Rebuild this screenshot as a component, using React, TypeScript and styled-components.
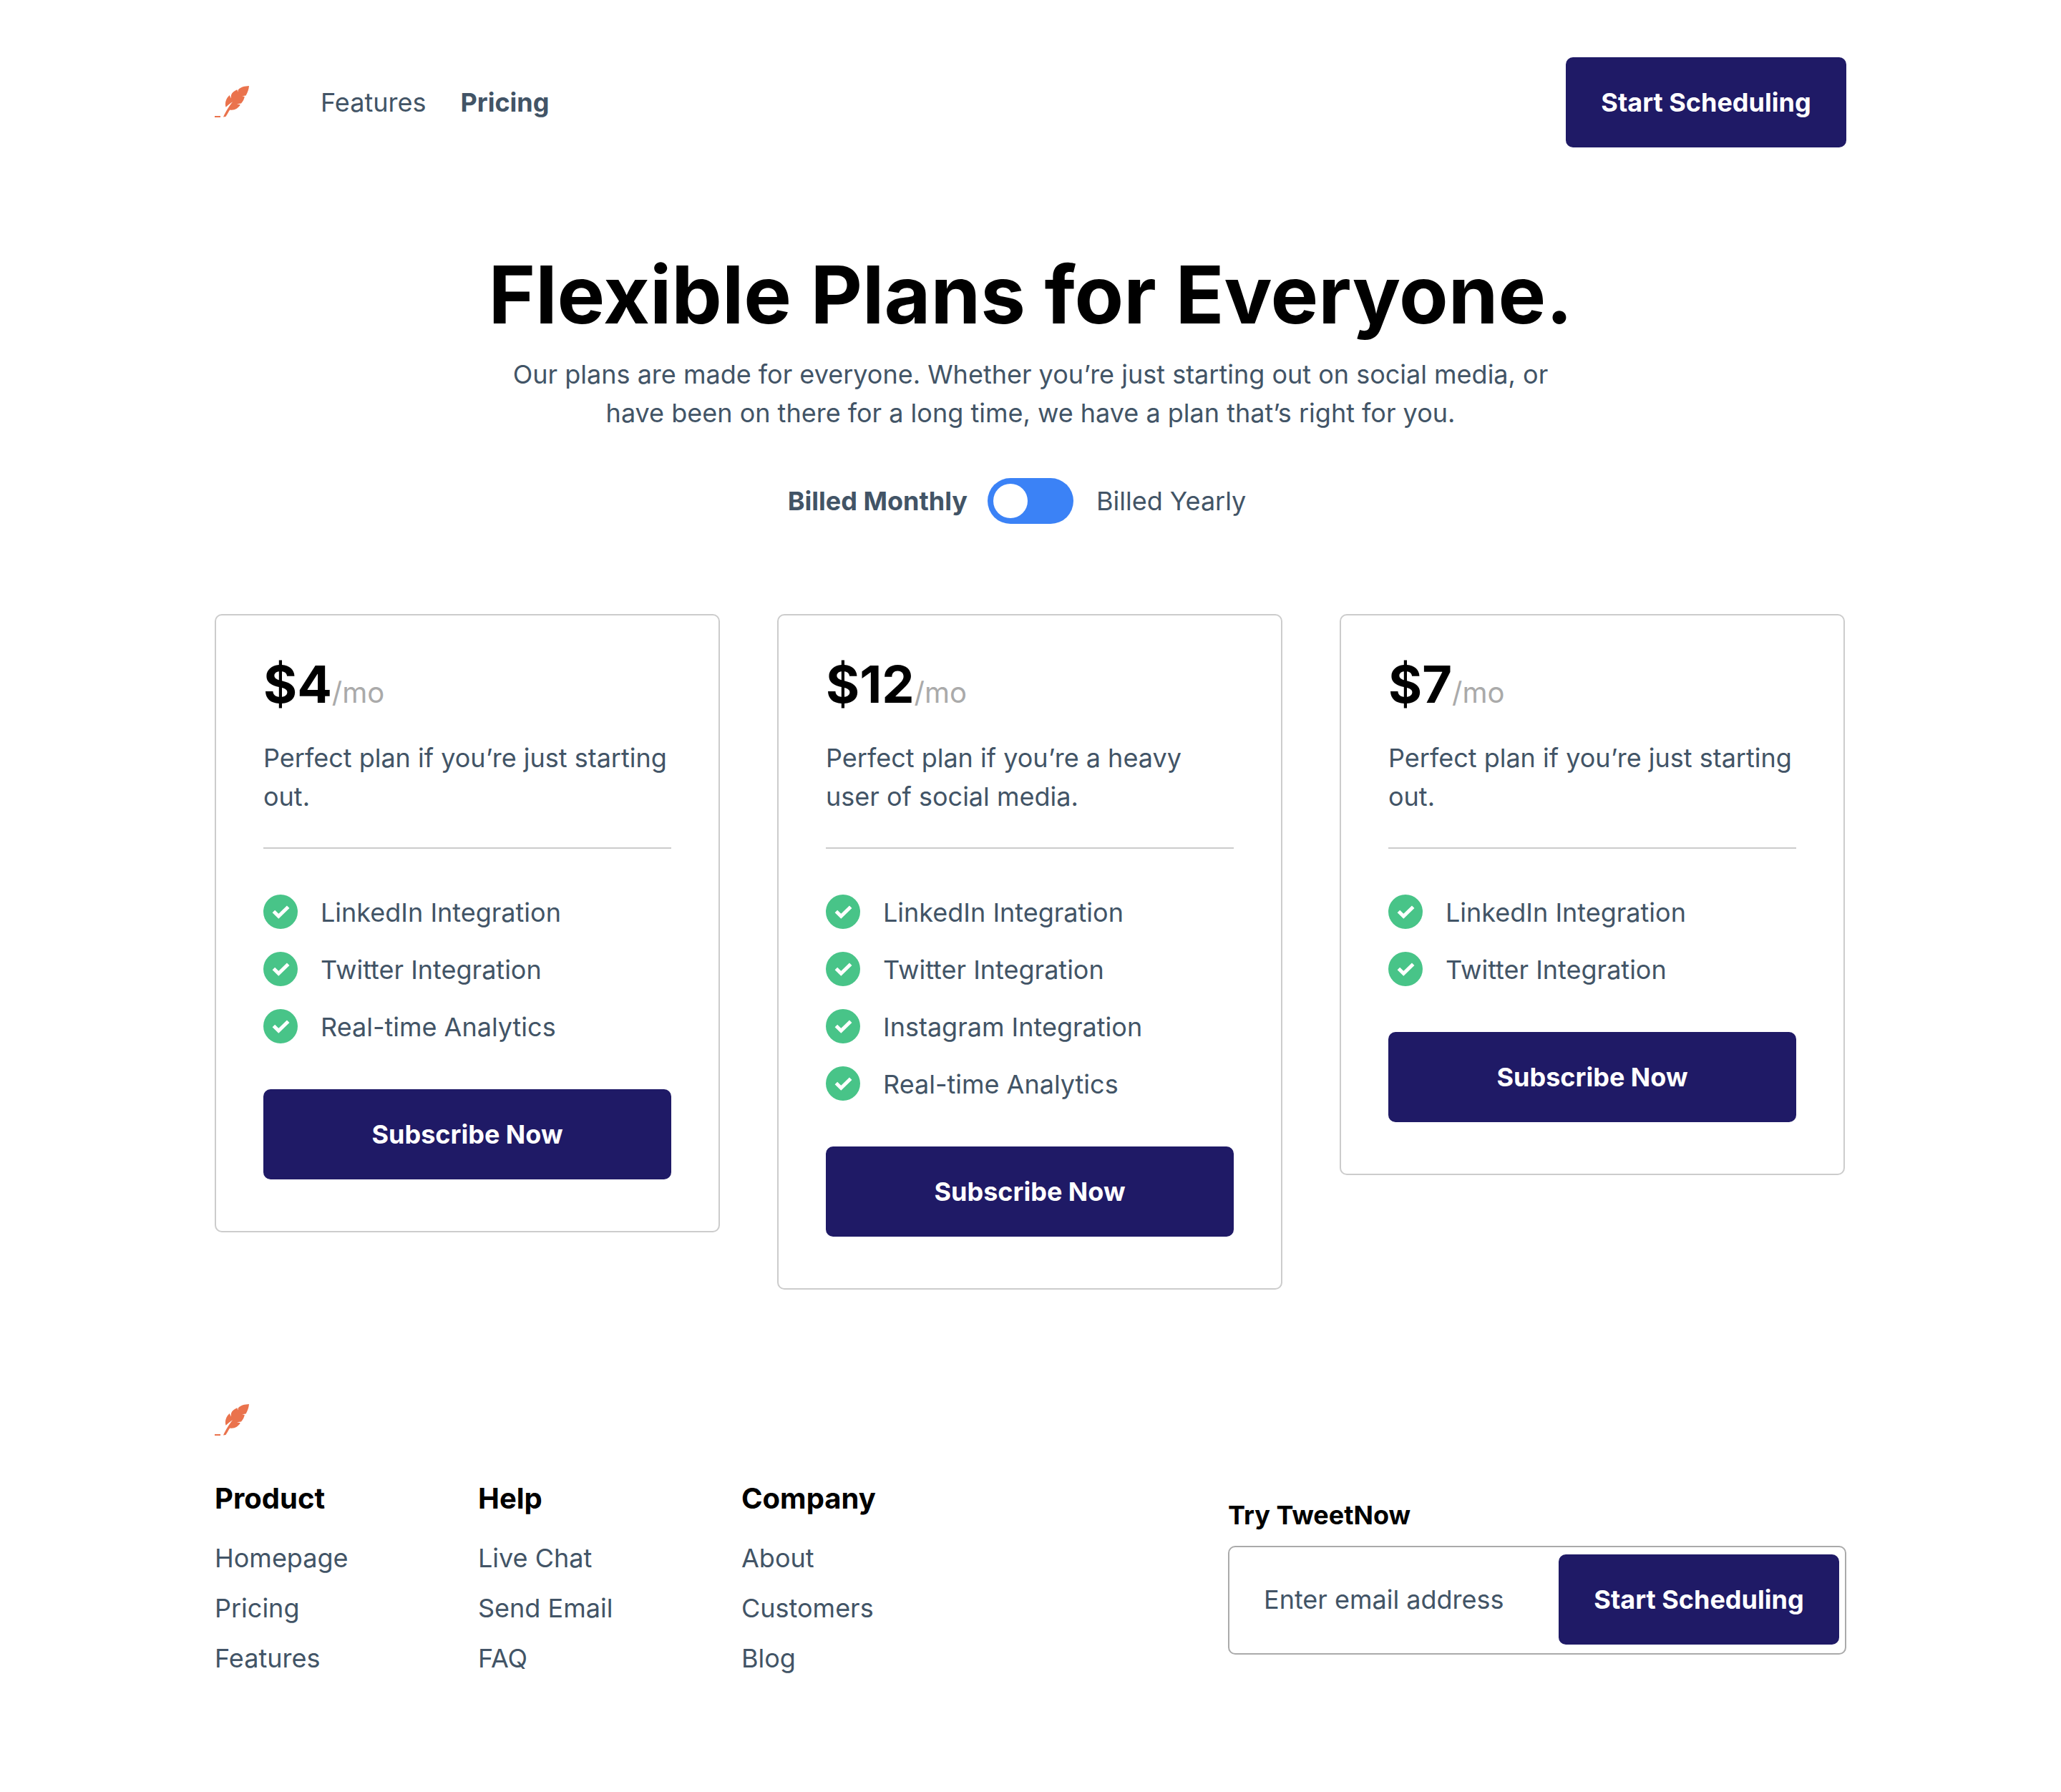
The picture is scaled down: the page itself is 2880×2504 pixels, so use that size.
import React, { useState } from 'react';
import styled, { createGlobalStyle } from 'styled-components';

const color = {
  ink: '#000000',
  text: '#425466',
  muted: '#aaaaaa',
  line: '#cccccc',
  field: '#aaaaaa',
  primary: '#1f1a66',
  accent: '#3b82f6',
  success: '#48c488',
  brand: '#ea734d',
};

const GlobalStyle = createGlobalStyle`
  *, *::before, *::after { box-sizing: border-box; }
  body {
    margin: 0;
    background: #ffffff;
    color: ${color.text};
    font-family: Inter, "Liberation Sans", sans-serif;
    font-size: 36px;
    line-height: 54px;
  }
  h1, h2, p, ul { margin: 0; padding: 0; }
  ul { list-style: none; }
  button, input { font: inherit; }
`;

const Page = styled.div`
  width: min(2280px, 100% - 96px);
  margin: 0 auto;
  padding: 80px 0 160px;
`;

const Header = styled.header`
  display: flex;
  align-items: center;
  justify-content: space-between;
`;

const Nav = styled.nav`
  display: flex;
  align-items: center;
  gap: 48px;
`;

const HomeLink = styled.a`
  display: block;
  width: 48px;
  height: 46px;
  margin-right: 52px;
`;

const NavLink = styled.a<{ $active?: boolean }>`
  color: inherit;
  text-decoration: none;
  font-weight: ${(p) => (p.$active ? 700 : 400)};
`;

const Button = styled.button<{ $block?: boolean }>`
  width: ${(p) => (p.$block ? '100%' : 'auto')};
  min-width: 392px;
  flex-shrink: 0;
  padding: 36px 48px;
  border: 0;
  border-radius: 10px;
  background: ${color.primary};
  color: #ffffff;
  font-weight: 700;
  cursor: pointer;
`;

const Hero = styled.section`
  display: flex;
  flex-direction: column;
  align-items: center;
  padding-top: 137px;
  text-align: center;
`;

const Title = styled.h1`
  color: ${color.ink};
  font-size: 112px;
  line-height: 136px;
  font-weight: 700;
`;

const Lead = styled.p`
  max-width: 1520px;
  margin-top: 17px;
`;

const Billing = styled.div`
  display: grid;
  grid-template-columns: 1fr auto 1fr;
  align-items: center;
  width: 100%;
  margin-top: 64px;
`;

const BillingLabel = styled.label<{ $active: boolean; $side: 'left' | 'right' }>`
  padding: ${(p) => (p.$side === 'left' ? '0 28px 0 0' : '0 0 0 32px')};
  text-align: ${(p) => (p.$side === 'left' ? 'right' : 'left')};
  font-weight: ${(p) => (p.$active ? 700 : 400)};
  cursor: pointer;
`;

const Toggle = styled.input`
  appearance: none;
  display: flex;
  align-items: center;
  width: 120px;
  height: 64px;
  margin: 0;
  padding: 0 8px;
  border-radius: 32px;
  background: ${color.accent};
  cursor: pointer;

  &::before {
    content: '';
    width: 48px;
    height: 48px;
    border-radius: 50%;
    background: #ffffff;
  }

  &:checked {
    justify-content: flex-end;
  }
`;

const Plans = styled.section`
  display: grid;
  grid-template-columns: repeat(3, minmax(0, 706px));
  align-items: start;
  gap: 80px;
  margin-top: 126px;
`;

const Card = styled.article`
  padding: 60px 66px 72px;
  border: 2px solid ${color.line};
  border-radius: 10px;
`;

const Price = styled.h2`
  color: ${color.ink};
  font-size: 72px;
  line-height: 72px;
  font-weight: 700;
`;

const Period = styled.span`
  color: ${color.muted};
  font-size: 40px;
  line-height: 40px;
  font-weight: 400;
`;

const Summary = styled.p`
  margin-top: 40px;
  padding-bottom: 44px;
  border-bottom: 2px solid ${color.line};
`;

const FeatureList = styled.ul`
  display: grid;
  gap: 30px;
  padding: 64px 0 62px;
`;

const Feature = styled.li`
  display: flex;
  gap: 32px;
  line-height: 50px;
`;

const CheckIcon = styled.svg`
  flex-shrink: 0;
  width: 48px;
  height: 48px;
`;

const Footer = styled.footer`
  padding-top: 160px;
`;

const FooterBody = styled.div`
  display: flex;
  align-items: flex-end;
  justify-content: space-between;
  margin-top: 58px;
`;

const LinkGroups = styled.div`
  display: flex;
  gap: 178px;
`;

const LinkGroup = styled.nav`
  min-width: 190px;
`;

const GroupTitle = styled.h2`
  margin-bottom: 26px;
  color: ${color.ink};
  font-size: 40px;
  line-height: 60px;
  font-weight: 700;
`;

const LinkList = styled.ul`
  display: grid;
  gap: 16px;
`;

const SignUp = styled.form`
  width: 864px;
  padding-bottom: 32px;
`;

const SignUpLabel = styled.label`
  display: block;
  margin-bottom: 16px;
  color: ${color.ink};
  font-weight: 700;
`;

const SignUpField = styled.div`
  display: flex;
  align-items: center;
  padding: 10px 8px 12px 0;
  border: 2px solid ${color.field};
  border-radius: 10px;
`;

const EmailInput = styled.input`
  flex: 1;
  min-width: 0;
  padding: 0 0 0 48px;
  border: 0;
  outline: 0;
  background: transparent;
  color: ${color.text};

  &::placeholder {
    color: ${color.text};
    opacity: 1;
  }
`;

const LogoSvg = styled.svg`
  display: block;
  width: 48px;
  height: 44px;
  fill: ${color.brand};
`;

const Logo = () => (
  <LogoSvg viewBox="0 0 48 44" aria-hidden="true">
    <path d="M0 42h8v2H0z" />
    <path d="M48 0C42 .2 36.500 1.500 32.800 5.400L32.400 8.600L31.400 5.200C27.200 7 24 9.500 23 13L22.600 17.500L20.800 13C16 17.400 13.800 23.500 15.600 29.800C19 26.500 22 24 25.200 22.200C20.500 27.500 15.500 35.500 12 43.600L15.400 43C17.800 39.500 19 36.500 21.200 33.400C27.500 34.500 32.800 31.500 35.800 26.200L31 25.300L37 24.400C39.600 21.500 41.200 18.500 41.800 15L38.400 14.200L43.600 13.400C46 9.500 47.600 5 48 0z" />
  </LogoSvg>
);

const Check = () => (
  <CheckIcon viewBox="0 0 48 48" aria-hidden="true">
    <circle cx="24" cy="24" r="24" fill={color.success} />
    <path d="M14.4 23.4L21.3 30.3L34.7 17.2" fill="none" stroke="#ffffff" strokeWidth="5" />
  </CheckIcon>
);

const plans = [
  {
    price: '$4',
    summary: 'Perfect plan if you’re just starting out.',
    features: ['LinkedIn Integration', 'Twitter Integration', 'Real-time Analytics'],
  },
  {
    price: '$12',
    summary: 'Perfect plan if you’re a heavy user of social media.',
    features: [
      'LinkedIn Integration',
      'Twitter Integration',
      'Instagram Integration',
      'Real-time Analytics',
    ],
  },
  {
    price: '$7',
    summary: 'Perfect plan if you’re just starting out.',
    features: ['LinkedIn Integration', 'Twitter Integration'],
  },
];

const groups = [
  { title: 'Product', links: ['Homepage', 'Pricing', 'Features'] },
  { title: 'Help', links: ['Live Chat', 'Send Email', 'FAQ'] },
  { title: 'Company', links: ['About', 'Customers', 'Blog'] },
];

export default function App() {
  const [yearly, setYearly] = useState(false);

  return (
    <>
      <GlobalStyle />
      <Page>
        <Header>
          <Nav>
            <HomeLink href="#" aria-label="TweetNow">
              <Logo />
            </HomeLink>
            <NavLink href="#features">Features</NavLink>
            <NavLink href="#pricing" $active>
              Pricing
            </NavLink>
          </Nav>
          <Button type="button">Start Scheduling</Button>
        </Header>

        <main>
          <Hero>
            <Title>Flexible Plans for Everyone.</Title>
            <Lead>
              Our plans are made for everyone. Whether you’re just starting out on social media, or
              have been on there for a long time, we have a plan that’s right for you.
            </Lead>
            <Billing>
              <BillingLabel htmlFor="billing" $active={!yearly} $side="left">
                Billed Monthly
              </BillingLabel>
              <Toggle
                id="billing"
                type="checkbox"
                role="switch"
                checked={yearly}
                onChange={(e) => setYearly(e.target.checked)}
              />
              <BillingLabel htmlFor="billing" $active={yearly} $side="right">
                Billed Yearly
              </BillingLabel>
            </Billing>
          </Hero>

          <Plans>
            {plans.map((plan) => (
              <Card key={plan.price}>
                <Price>
                  {plan.price}
                  <Period>/mo</Period>
                </Price>
                <Summary>{plan.summary}</Summary>
                <FeatureList>
                  {plan.features.map((feature) => (
                    <Feature key={feature}>
                      <Check />
                      {feature}
                    </Feature>
                  ))}
                </FeatureList>
                <Button type="button" $block>
                  Subscribe Now
                </Button>
              </Card>
            ))}
          </Plans>
        </main>

        <Footer>
          <Logo />
          <FooterBody>
            <LinkGroups>
              {groups.map((group) => (
                <LinkGroup key={group.title} aria-label={group.title}>
                  <GroupTitle>{group.title}</GroupTitle>
                  <LinkList>
                    {group.links.map((link) => (
                      <li key={link}>
                        <NavLink href="#">{link}</NavLink>
                      </li>
                    ))}
                  </LinkList>
                </LinkGroup>
              ))}
            </LinkGroups>
            <SignUp onSubmit={(e) => e.preventDefault()}>
              <SignUpLabel htmlFor="email">Try TweetNow</SignUpLabel>
              <SignUpField>
                <EmailInput id="email" type="email" placeholder="Enter email address" />
                <Button type="submit">Start Scheduling</Button>
              </SignUpField>
            </SignUp>
          </FooterBody>
        </Footer>
      </Page>
    </>
  );
}
